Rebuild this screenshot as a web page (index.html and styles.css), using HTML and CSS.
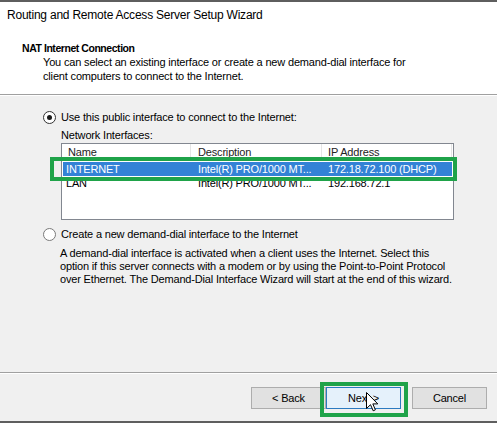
FILE: index.html
```html
<!DOCTYPE html>
<html>
<head>
<meta charset="utf-8">
<link rel="stylesheet" href="styles.css">
</head>
<body>
<div class="window">
  <div class="header">
    <div class="title">Routing and Remote Access Server Setup Wizard</div>
    <div class="heading">NAT Internet Connection</div>
    <div class="subtitle">You can select an existing interface or create a new demand-dial interface for<br>client computers to connect to the Internet.</div>
  </div>
  <div class="body">
    <div class="option"><span class="radio checked"></span><span>Use this public interface to connect to the Internet:</span></div>
    <div class="list-label">Network Interfaces:</div>
    <div class="list-wrap">
      <div class="list">
        <div class="list-head">
          <div class="hcell">Name</div>
          <div class="hcell">Description</div>
          <div class="hcell last">IP Address</div>
        </div>
        <div class="row selected">
          <div class="c1">INTERNET</div>
          <div class="c2">Intel(R) PRO/1000 MT...</div>
          <div class="c3">172.18.72.100 (DHCP)</div>
        </div>
        <div class="row">
          <div class="c1">LAN</div>
          <div class="c2">Intel(R) PRO/1000 MT...</div>
          <div class="c3">192.168.72.1</div>
        </div>
      </div>
      <div class="highlight row-hl"></div>
    </div>
    <div class="option second"><span class="radio"></span><span>Create a new demand-dial interface to the Internet</span></div>
    <p class="desc">A demand-dial interface is activated when a client uses the Internet. Select this<br>option if this server connects with a modem or by using the Point-to-Point Protocol<br>over Ethernet. The Demand-Dial Interface Wizard will start at the end of this wizard.</p>
  </div>
  <div class="footer">
    <button class="btn">&lt; Back</button>
    <div class="next-wrap">
      <button class="btn next">Next &gt;</button>
      <div class="highlight btn-hl"></div>
      <svg class="cursor" width="13" height="20" viewBox="0 0 13 20"><path d="M0.5,0.5 L0.5,16.5 L4.5,12.7 L7.2,18.8 L9.4,17.8 L6.8,11.9 L11.8,11.9 Z" fill="#fff" stroke="#000" stroke-width="1" stroke-linejoin="miter"/></svg>
    </div>
    <button class="btn cancel">Cancel</button>
  </div>
</div>
</body>
</html>
```
FILE: styles.css
```css
html, body {
  margin: 0;
  padding: 0;
  background: #f0f0f0;
}
.window {
  width: 497px;
  height: 423px;
  box-sizing: border-box;
  border-top: 2px solid #5e5e5e;
  border-bottom: 2px solid #5e5e5e;
  display: flex;
  flex-direction: column;
  font-family: "Liberation Sans", Arial, sans-serif;
  font-size: 11px;
  letter-spacing: -0.17px;
  color: #000;
  overflow: hidden;
}
.header {
  background: #fff;
  height: 93px;
  box-sizing: border-box;
  padding-top: 5px;
  border-bottom: 1px solid #a0a0a0;
}
.title {
  font-size: 12px;
  letter-spacing: -0.22px;
  line-height: 16px;
  padding-left: 7px;
  color: #000;
}
.heading {
  font-weight: bold;
  font-size: 10.5px;
  letter-spacing: -0.45px;
  line-height: 14px;
  margin-top: 18px;
  padding-left: 22px;
}
.subtitle {
  line-height: 14px;
  padding-left: 43px;
}
.body {
  border-top: 1px solid #fff;
  height: 278px;
  box-sizing: border-box;
  padding: 14px 0 0 43px;
  border-bottom: 1px solid #a0a0a0;
}
.option {
  display: flex;
  align-items: center;
  height: 14px;
  line-height: 14px;
}
.option.second {
  margin-top: 7px;
}
.radio {
  width: 13px;
  height: 13px;
  box-sizing: border-box;
  border: 1px solid #7a7a7a;
  border-radius: 50%;
  background: #fff;
  margin-right: 5px;
  display: flex;
  align-items: center;
  justify-content: center;
  flex: none;
}
.radio.checked {
  border-color: #333;
}
.radio.checked::after {
  content: "";
  width: 5px;
  height: 5px;
  border-radius: 50%;
  background: #1a1a1a;
}
.list-label {
  margin: 5px 0 0 18px;
  line-height: 13px;
  height: 14px;
}
.list-wrap {
  position: relative;
  margin-left: 18px;
  width: 393px;
}
.list {
  height: 77px;
  box-sizing: border-box;
  border: 1px solid #828790;
  background: #fff;
}
.list-head {
  display: grid;
  grid-template-columns: 129px 131px 130px;
  height: 16px;
  line-height: 16px;
}
.hcell {
  border-right: 1px solid #e5e5e5;
  padding-left: 6px;
  color: #222;
  white-space: nowrap;
}
.hcell:nth-child(2) { padding-left: 7px; }
.row {
  display: grid;
  grid-template-columns: 128px 131px 1fr;
  height: 14px;
  line-height: 14px;
  margin-left: 1px;
  width: 389px;
  white-space: nowrap;
}
.list-head + .row {
  margin-top: 2px;
}
.row .c1 { padding-left: 3px; }
.row .c2 { padding-left: 7px; }
.row .c3 { padding-left: 6px; }
.row.selected {
  background: #3382d6;
  color: #fff;
}
.highlight {
  position: absolute;
  box-sizing: border-box;
  border: 4px solid #1fa349;
}
.row-hl {
  left: -11px;
  top: 14px;
  width: 407px;
  height: 24px;
}
.desc {
  margin: 6px 0 0 17px;
  line-height: 13px;
}
.footer {
  border-top: 1px solid #fff;
  flex: 1;
  display: flex;
  align-items: flex-start;
  justify-content: flex-end;
  padding: 13px 10px 0 0;
}
.btn {
  width: 75px;
  height: 22px;
  box-sizing: border-box;
  border: 1px solid #adadad;
  background: #e1e1e1;
  font-family: "Liberation Sans", Arial, sans-serif;
  font-size: 11px;
  letter-spacing: -0.17px;
  color: #000;
  padding: 0;
  margin: 0;
}
.next-wrap {
  position: relative;
  width: 75px;
  height: 22px;
}
.btn.next {
  background: #e5f1fb;
  border-color: #2b7ac0;
}
.btn-hl {
  left: -6px;
  top: -5px;
  width: 88px;
  height: 35px;
}
.cursor {
  position: absolute;
  left: 40px;
  top: 5px;
}
.cancel {
  margin-left: 11px;
}
```
